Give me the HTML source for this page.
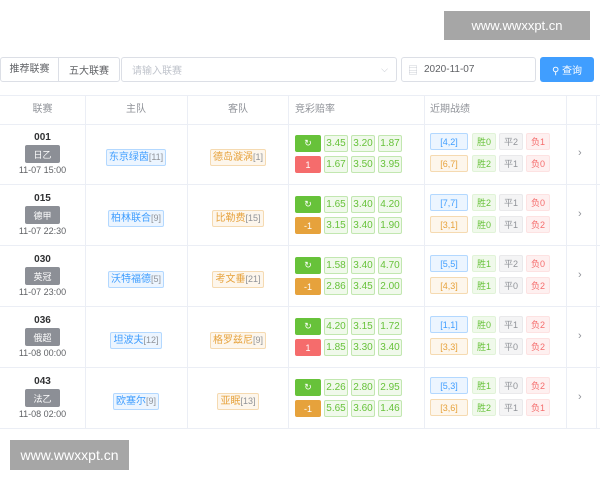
<!DOCTYPE html>
<html><head><meta charset="utf-8"><style>
*{box-sizing:border-box;margin:0;padding:0}
body{width:600px;height:480px;background:#fff;font-family:"Liberation Sans","Noto Sans CJK SC",sans-serif;position:relative;overflow:hidden;color:#606266}
.a{position:absolute}
.wm{background:#a6a6a6;color:#fff;font-size:13px;display:flex;align-items:center;justify-content:center}
.box{border:1px solid #dcdfe6;border-radius:3px;font-size:10px;display:flex;align-items:center}
.vl{width:1px;background:#ebeef5}
.hl{height:1px;background:#ebeef5;left:0;width:600px}
.t{font-size:9px;display:flex;align-items:center;justify-content:center;border-radius:2px;border-width:1px;border-style:solid;white-space:nowrap}
.num{font-weight:bold;font-size:10px;color:#303133;width:85px;text-align:center}
.lg{background:#8c8f96;color:#fff;font-size:9px;border-radius:2px;display:flex;align-items:center;justify-content:center;width:35px;height:18px;left:25px}
.tm{width:85px;text-align:center;font-size:9px}
.home{background:#ecf5ff;border-color:#b3d8ff;color:#409eff}
.away{background:#fdf6ec;border-color:#f5dab1;color:#e6a23c}
.tc{position:absolute;top:25px;width:102px;display:flex;justify-content:center}
.tc>div{border-width:1px;border-style:solid;border-radius:2px;height:17px;line-height:15px;padding:0 2px;font-size:10px;white-space:nowrap}
.tc span{font-size:9px;color:#909399}
.o{background:#f0f9eb;border-color:#c2e7b0;color:#67c23a;font-size:10px}
.gb{background:#67c23a;border-color:#67c23a;color:#fff}
.rb{background:#f56c6c;border-color:#f56c6c;color:#fff}
.ob{background:#e6a23c;border-color:#e6a23c;color:#fff}
.w{background:#f0f9eb;border-color:#e1f3d8;color:#67c23a}
.d{background:#f4f4f5;border-color:#e9e9eb;color:#909399}
.l{background:#fef0f0;border-color:#fde2e2;color:#f56c6c}
.ar{color:#909399;font-size:11px}
</style></head><body>
<div class="a wm" style="left:444px;top:11px;width:146px;height:29px">www.wwxxpt.cn</div>
<div class="a wm" style="left:10px;top:440px;width:119px;height:30px;font-size:14px">www.wwxxpt.cn</div>

<div class="a box" style="left:0;top:57px;width:120px;height:25px;color:#606266;padding:0"><span style="width:58px;text-align:center;border-right:1px solid #dcdfe6;line-height:23px">推荐联赛</span><span style="width:60px;text-align:center">五大联赛</span></div>
<div class="a box" style="left:121px;top:57px;width:276px;height:25px;color:#c0c4cc;padding-left:10px">请输入联赛<span style="position:absolute;right:8px;font-size:9px">⌵</span></div>
<div class="a box" style="left:401px;top:57px;width:135px;height:25px;padding-left:6px;color:#606266"><span style="color:#c0c4cc;margin-right:6px">▤</span>2020-11-07</div>
<div class="a" style="left:540px;top:57px;width:54px;height:25px;background:#409eff;border-radius:3px;color:#fff;font-size:10px;display:flex;align-items:center;justify-content:center">⚲ 查询</div>

<div class="a" style="top:95px;left:0;width:85px;height:29px;line-height:29px;text-align:center;font-size:10px;color:#909399">联赛</div>
<div class="a" style="top:95px;left:85px;width:102px;height:29px;line-height:29px;text-align:center;font-size:10px;color:#909399">主队</div>
<div class="a" style="top:95px;left:187px;width:102px;height:29px;line-height:29px;text-align:center;font-size:10px;color:#909399">客队</div>
<div class="a" style="top:95px;left:295px;height:29px;line-height:29px;font-size:10px;color:#909399">竞彩赔率</div>
<div class="a" style="top:95px;left:430px;height:29px;line-height:29px;font-size:10px;color:#909399">近期战绩</div>

<div class="a vl" style="left:85px;top:95px;height:333px"></div>
<div class="a vl" style="left:187px;top:95px;height:333px"></div>
<div class="a vl" style="left:288px;top:95px;height:333px"></div>
<div class="a vl" style="left:424px;top:95px;height:333px"></div>
<div class="a vl" style="left:566px;top:95px;height:333px"></div>
<div class="a vl" style="left:596px;top:95px;height:333px"></div>
<div class="a hl" style="top:95px"></div>
<div class="a hl" style="top:124px"></div>
<div class="a hl" style="top:184px"></div>
<div class="a hl" style="top:245px"></div>
<div class="a hl" style="top:306px"></div>
<div class="a hl" style="top:367px"></div>
<div class="a hl" style="top:428px"></div>

<div class="a" style="top:124px;left:0;width:600px;height:60px">
<div class="a num" style="top:8px">001</div><div class="a lg" style="top:21px">日乙</div><div class="a tm" style="top:41px">11-07 15:00</div>
<div class="tc" style="left:85px"><div class="home">东京绿茵<span>[11]</span></div></div>
<div class="tc" style="left:187px"><div class="away">德岛漩涡<span>[1]</span></div></div>
<div class="a t gb" style="left:295px;top:11px;width:26px;height:17px">↻</div><div class="a t o" style="left:324px;top:11px;width:24px;height:17px">3.45</div><div class="a t o" style="left:351px;top:11px;width:24px;height:17px">3.20</div><div class="a t o" style="left:378px;top:11px;width:24px;height:17px">1.87</div>
<div class="a t rb" style="left:295px;top:32px;width:26px;height:17px">1</div><div class="a t o" style="left:324px;top:32px;width:24px;height:17px">1.67</div><div class="a t o" style="left:351px;top:32px;width:24px;height:17px">3.50</div><div class="a t o" style="left:378px;top:32px;width:24px;height:17px">3.95</div>
<div class="a t home" style="left:430px;top:9px;width:38px;height:17px">[4,2]</div><div class="a t w" style="left:472px;top:9px;width:24px;height:17px">胜0</div><div class="a t d" style="left:499px;top:9px;width:24px;height:17px">平2</div><div class="a t l" style="left:526px;top:9px;width:24px;height:17px">负1</div>
<div class="a t away" style="left:430px;top:31px;width:38px;height:17px">[6,7]</div><div class="a t w" style="left:472px;top:31px;width:24px;height:17px">胜2</div><div class="a t d" style="left:499px;top:31px;width:24px;height:17px">平1</div><div class="a t l" style="left:526px;top:31px;width:24px;height:17px">负0</div>
<div class="a ar" style="left:578px;top:23px">›</div>
</div>

<div class="a" style="top:185px;left:0;width:600px;height:60px">
<div class="a num" style="top:8px">015</div><div class="a lg" style="top:21px">德甲</div><div class="a tm" style="top:41px">11-07 22:30</div>
<div class="tc" style="left:85px"><div class="home">柏林联合<span>[9]</span></div></div>
<div class="tc" style="left:187px"><div class="away">比勒费<span>[15]</span></div></div>
<div class="a t gb" style="left:295px;top:11px;width:26px;height:17px">↻</div><div class="a t o" style="left:324px;top:11px;width:24px;height:17px">1.65</div><div class="a t o" style="left:351px;top:11px;width:24px;height:17px">3.40</div><div class="a t o" style="left:378px;top:11px;width:24px;height:17px">4.20</div>
<div class="a t ob" style="left:295px;top:32px;width:26px;height:17px">-1</div><div class="a t o" style="left:324px;top:32px;width:24px;height:17px">3.15</div><div class="a t o" style="left:351px;top:32px;width:24px;height:17px">3.40</div><div class="a t o" style="left:378px;top:32px;width:24px;height:17px">1.90</div>
<div class="a t home" style="left:430px;top:9px;width:38px;height:17px">[7,7]</div><div class="a t w" style="left:472px;top:9px;width:24px;height:17px">胜2</div><div class="a t d" style="left:499px;top:9px;width:24px;height:17px">平1</div><div class="a t l" style="left:526px;top:9px;width:24px;height:17px">负0</div>
<div class="a t away" style="left:430px;top:31px;width:38px;height:17px">[3,1]</div><div class="a t w" style="left:472px;top:31px;width:24px;height:17px">胜0</div><div class="a t d" style="left:499px;top:31px;width:24px;height:17px">平1</div><div class="a t l" style="left:526px;top:31px;width:24px;height:17px">负2</div>
<div class="a ar" style="left:578px;top:23px">›</div>
</div>

<div class="a" style="top:246px;left:0;width:600px;height:60px">
<div class="a num" style="top:8px">030</div><div class="a lg" style="top:21px">英冠</div><div class="a tm" style="top:41px">11-07 23:00</div>
<div class="tc" style="left:85px"><div class="home">沃特福德<span>[5]</span></div></div>
<div class="tc" style="left:187px"><div class="away">考文垂<span>[21]</span></div></div>
<div class="a t gb" style="left:295px;top:11px;width:26px;height:17px">↻</div><div class="a t o" style="left:324px;top:11px;width:24px;height:17px">1.58</div><div class="a t o" style="left:351px;top:11px;width:24px;height:17px">3.40</div><div class="a t o" style="left:378px;top:11px;width:24px;height:17px">4.70</div>
<div class="a t ob" style="left:295px;top:32px;width:26px;height:17px">-1</div><div class="a t o" style="left:324px;top:32px;width:24px;height:17px">2.86</div><div class="a t o" style="left:351px;top:32px;width:24px;height:17px">3.45</div><div class="a t o" style="left:378px;top:32px;width:24px;height:17px">2.00</div>
<div class="a t home" style="left:430px;top:9px;width:38px;height:17px">[5,5]</div><div class="a t w" style="left:472px;top:9px;width:24px;height:17px">胜1</div><div class="a t d" style="left:499px;top:9px;width:24px;height:17px">平2</div><div class="a t l" style="left:526px;top:9px;width:24px;height:17px">负0</div>
<div class="a t away" style="left:430px;top:31px;width:38px;height:17px">[4,3]</div><div class="a t w" style="left:472px;top:31px;width:24px;height:17px">胜1</div><div class="a t d" style="left:499px;top:31px;width:24px;height:17px">平0</div><div class="a t l" style="left:526px;top:31px;width:24px;height:17px">负2</div>
<div class="a ar" style="left:578px;top:23px">›</div>
</div>

<div class="a" style="top:307px;left:0;width:600px;height:60px">
<div class="a num" style="top:8px">036</div><div class="a lg" style="top:21px">俄超</div><div class="a tm" style="top:41px">11-08 00:00</div>
<div class="tc" style="left:85px"><div class="home">坦波夫<span>[12]</span></div></div>
<div class="tc" style="left:187px"><div class="away">格罗兹尼<span>[9]</span></div></div>
<div class="a t gb" style="left:295px;top:11px;width:26px;height:17px">↻</div><div class="a t o" style="left:324px;top:11px;width:24px;height:17px">4.20</div><div class="a t o" style="left:351px;top:11px;width:24px;height:17px">3.15</div><div class="a t o" style="left:378px;top:11px;width:24px;height:17px">1.72</div>
<div class="a t rb" style="left:295px;top:32px;width:26px;height:17px">1</div><div class="a t o" style="left:324px;top:32px;width:24px;height:17px">1.85</div><div class="a t o" style="left:351px;top:32px;width:24px;height:17px">3.30</div><div class="a t o" style="left:378px;top:32px;width:24px;height:17px">3.40</div>
<div class="a t home" style="left:430px;top:9px;width:38px;height:17px">[1,1]</div><div class="a t w" style="left:472px;top:9px;width:24px;height:17px">胜0</div><div class="a t d" style="left:499px;top:9px;width:24px;height:17px">平1</div><div class="a t l" style="left:526px;top:9px;width:24px;height:17px">负2</div>
<div class="a t away" style="left:430px;top:31px;width:38px;height:17px">[3,3]</div><div class="a t w" style="left:472px;top:31px;width:24px;height:17px">胜1</div><div class="a t d" style="left:499px;top:31px;width:24px;height:17px">平0</div><div class="a t l" style="left:526px;top:31px;width:24px;height:17px">负2</div>
<div class="a ar" style="left:578px;top:23px">›</div>
</div>

<div class="a" style="top:368px;left:0;width:600px;height:60px">
<div class="a num" style="top:8px">043</div><div class="a lg" style="top:21px">法乙</div><div class="a tm" style="top:41px">11-08 02:00</div>
<div class="tc" style="left:85px"><div class="home">欧塞尔<span>[9]</span></div></div>
<div class="tc" style="left:187px"><div class="away">亚眠<span>[13]</span></div></div>
<div class="a t gb" style="left:295px;top:11px;width:26px;height:17px">↻</div><div class="a t o" style="left:324px;top:11px;width:24px;height:17px">2.26</div><div class="a t o" style="left:351px;top:11px;width:24px;height:17px">2.80</div><div class="a t o" style="left:378px;top:11px;width:24px;height:17px">2.95</div>
<div class="a t ob" style="left:295px;top:32px;width:26px;height:17px">-1</div><div class="a t o" style="left:324px;top:32px;width:24px;height:17px">5.65</div><div class="a t o" style="left:351px;top:32px;width:24px;height:17px">3.60</div><div class="a t o" style="left:378px;top:32px;width:24px;height:17px">1.46</div>
<div class="a t home" style="left:430px;top:9px;width:38px;height:17px">[5,3]</div><div class="a t w" style="left:472px;top:9px;width:24px;height:17px">胜1</div><div class="a t d" style="left:499px;top:9px;width:24px;height:17px">平0</div><div class="a t l" style="left:526px;top:9px;width:24px;height:17px">负2</div>
<div class="a t away" style="left:430px;top:31px;width:38px;height:17px">[3,6]</div><div class="a t w" style="left:472px;top:31px;width:24px;height:17px">胜2</div><div class="a t d" style="left:499px;top:31px;width:24px;height:17px">平1</div><div class="a t l" style="left:526px;top:31px;width:24px;height:17px">负1</div>
<div class="a ar" style="left:578px;top:23px">›</div>
</div>
</body></html>
